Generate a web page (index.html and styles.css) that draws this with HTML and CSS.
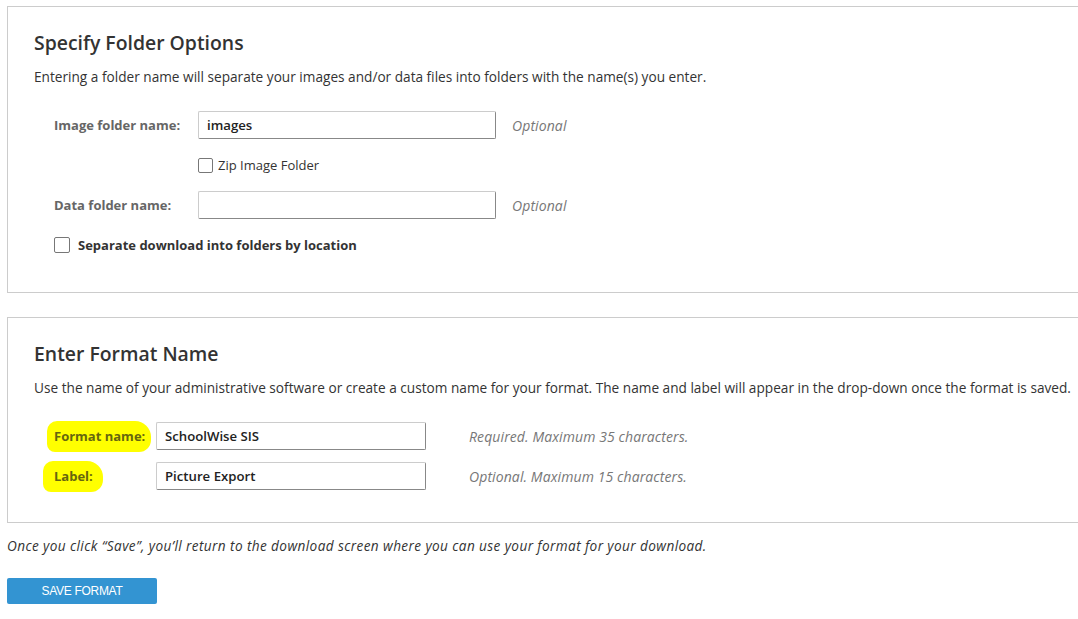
FILE: index.html
```html
<!DOCTYPE html>
<html lang="en">
<head>
    <meta charset="UTF-8">
    <title>Export Format - Folder Options</title>
    <link rel="stylesheet" href="styles.css">
</head>
<body>
    <div class="page">
        <div class="panel panel-folders">
            <h2 class="panel-title">Specify Folder Options</h2>
            <p class="panel-desc">Entering a folder name will separate your images and/or data files into folders with the name(s) you enter.</p>

            <div class="form-row">
                <label class="field-label" for="image-folder">Image folder name:</label>
                <input class="text-input" id="image-folder" type="text" value="images">
                <span class="hint">Optional</span>
            </div>
            <div class="form-row indent">
                <input class="check" id="zip-folder" type="checkbox">
                <label class="check-label plain" for="zip-folder">Zip Image Folder</label>
            </div>
            <div class="form-row">
                <label class="field-label" for="data-folder">Data folder name:</label>
                <input class="text-input" id="data-folder" type="text" value="">
                <span class="hint">Optional</span>
            </div>
            <div class="form-row">
                <input class="check check-lg" id="by-location" type="checkbox">
                <label class="check-label" for="by-location">Separate download into folders by location</label>
            </div>
        </div>

        <div class="panel panel-format">
            <h2 class="panel-title">Enter Format Name</h2>
            <p class="panel-desc">Use the name of your administrative software or create a custom name for your format. The name and label will appear in the drop-down once the format is saved.</p>

            <div class="form-row">
                <label class="field-label short" for="format-name"><span class="marker marker-a">Format name:</span></label>
                <input class="text-input narrow" id="format-name" type="text" value="SchoolWise SIS">
                <span class="hint wide">Required. Maximum 35 characters.</span>
            </div>
            <div class="form-row">
                <label class="field-label short" for="format-label"><span class="marker marker-b">Label:</span></label>
                <input class="text-input narrow" id="format-label" type="text" value="Picture Export">
                <span class="hint wide">Optional. Maximum 15 characters.</span>
            </div>
        </div>

        <p class="note">Once you click “Save”, you’ll return to the download screen where you can use your format for your download.</p>

        <button class="save-btn" type="button">SAVE FORMAT</button>
    </div>
</body>
</html>
```

FILE: styles.css
```css
* {
    margin: 0;
    padding: 0;
    box-sizing: border-box;
}

body {
    font-family: 'Open Sans', 'Lato', sans-serif;
    font-size: 13px;
    color: #333;
    background: #fff;
    overflow: hidden;
}

.page {
    padding: 6px 0 0 7px;
    width: 1090px;
}

.panel {
    border: 1px solid #ccc;
    background: #fff;
    padding: 25px 26px 0 26px;
}

.panel-folders {
    height: 287px;
}

.panel-format {
    margin-top: 24px;
    height: 206px;
}

.panel-title {
    font-size: 19.4px;
    font-weight: 600;
    color: #333;
    line-height: 22px;
}

.panel-desc {
    margin-top: 15px;
    font-size: 13.65px;
    line-height: 16px;
    margin-bottom: 26px;
    white-space: nowrap;
}

.form-row {
    display: flex;
    align-items: center;
    margin-left: 20px;
    height: 28px;
    margin-bottom: 12px;
}

.field-label {
    width: 144px;
    font-weight: bold;
    color: #666;
}

.field-label.short {
    width: 102px;
}

.text-input {
    width: 298px;
    height: 28px;
    border: 1px solid #ccc;
    border-right-color: #888;
    border-bottom-color: #888;
    border-radius: 2px;
    padding: 0 8px;
    font-family: inherit;
    font-size: 13.2px;
    font-weight: 600;
    color: #222;
    outline: none;
}

.text-input.narrow {
    width: 270px;
}

.hint {
    margin-left: 16px;
    font-size: 14px;
    letter-spacing: 0.1px;
    font-style: italic;
    color: #777;
}

.hint.wide {
    margin-left: 43px;
}

.indent {
    margin-left: 164px;
}

.check {
    appearance: none;
    width: 15px;
    height: 15px;
    border: 1px solid #777;
    border-radius: 2px;
    background: #fff;
    margin-right: 5px;
}

.check-lg {
    width: 16px;
    height: 16px;
    margin-right: 8px;
}

.check-label {
    font-weight: bold;
}

.check-label.plain {
    font-weight: normal;
}

.marker {
    display: inline-block;
    background: #ffff00;
    padding: 7px 6px 8px 7px;
    margin-left: -7px;
    border-radius: 10px 16px 12px 8px;
    color: #66660f;
    line-height: 16px;
}

.marker-b {
    padding-right: 10px;
    margin-left: -11px;
    padding-left: 11px;
}

.note {
    margin-top: 13px;
    font-size: 13.6px;
    letter-spacing: 0.4px;
    font-style: italic;
    color: #333;
}

.save-btn {
    margin-top: 23px;
    width: 150px;
    height: 26px;
    background: #3394d2;
    color: #fff;
    border: none;
    border-radius: 2px;
    font-family: 'Liberation Sans', Arial, sans-serif;
    font-size: 12px;
    letter-spacing: -0.3px;
}
```
